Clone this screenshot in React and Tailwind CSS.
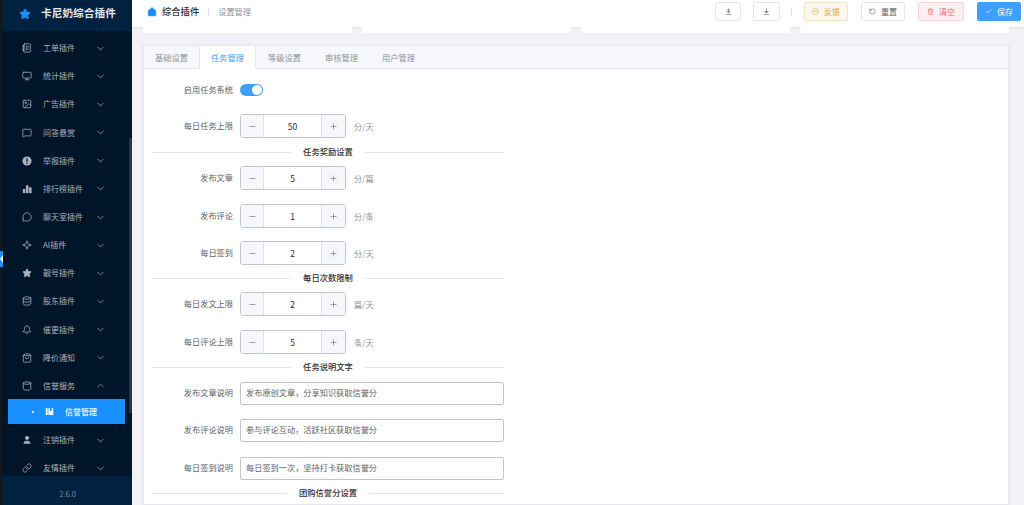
import React from "react";
import { Monitor, Image, MessageSquare, MessageCircle, Sparkle, Star, Database, Bell, ShoppingBag, Cylinder, User, Link, ChevronDown, ChevronUp, Home, RotateCcw, Trash2, Check, Minus, Plus, CircleMinus, NotebookText } from "lucide-react";

const font = { fontFamily: '"Noto Sans CJK SC", "Noto Sans", sans-serif' };

function AlertFilled({ size }) {
  return (
    <svg width={size} height={size} viewBox="0 0 24 24" className="shrink-0">
      <circle cx="12" cy="12" r="11" fill="currentColor" />
      <rect x="10.5" y="5.5" width="3" height="8.5" fill="#001529" />
      <rect x="10.5" y="16" width="3" height="3" fill="#001529" />
    </svg>
  );
}

function BarsFilled({ size }) {
  return (
    <svg width={size} height={size} viewBox="0 0 24 24" className="shrink-0" fill="currentColor">
      <rect x="2" y="12" width="6" height="10" />
      <rect x="9.5" y="3" width="6" height="19" />
      <rect x="17" y="8" width="6" height="14" />
    </svg>
  );
}

function ArrowBar({ size, down }) {
  return (
    <svg width={size} height={size} viewBox="0 0 24 24" fill="none" stroke="currentColor" strokeWidth="2.2">
      <path d="M3 22h18M5 13h14" />
      {down ? <path d="M12 2v15M7 11l5 6 5-6" /> : <path d="M12 18V3M7 9l5-6 5 6" />}
    </svg>
  );
}

function BookFilled({ size }) {
  return (
    <svg width={size} height={size} viewBox="0 0 24 24" className="shrink-0" fill="white">
      <path d="M2 3h5v18H2zM9 3h13v18H9z" />
      <path d="M13 3h5v8l-2.5-2-2.5 2z" fill="#1890ff" />
    </svg>
  );
}

const menu = [
  ["工单插件", NotebookText],
  ["统计插件", Monitor],
  ["广告插件", Image],
  ["问答悬赏", MessageSquare],
  ["举报插件", AlertFilled],
  ["排行榜插件", BarsFilled],
  ["聊天室插件", MessageCircle],
  ["AI插件", Sparkle],
  ["靓号插件", Star, true],
  ["股东插件", Database],
  ["催更插件", Bell],
  ["降价通知", ShoppingBag],
];

function MenuRow({ label, Icon, fill, open }) {
  return (
    <div className="flex h-[28.17px] shrink-0 items-center pl-[19px] pr-[26px] text-[#aab2bd]">
      <Icon size={10} strokeWidth={1.8} fill={fill ? "currentColor" : "none"} className="shrink-0" />
      <span className="ml-[11px] flex-1 text-[8px] leading-none">{label}</span>
      {open ? <ChevronUp size={11} strokeWidth={1.5} /> : <ChevronDown size={11} strokeWidth={1.5} />}
    </div>
  );
}

function Sidebar() {
  return (
    <aside className="relative flex h-full w-[132px] shrink-0 flex-col bg-[#001529] pl-[3px]">
      <div className="absolute left-0 top-0 h-full w-[3px] bg-[#10171f]" />
      <div className="absolute left-0 top-[251px] flex h-[16px] w-[3px] items-center overflow-hidden bg-[#1890ff]">
        <div className="h-0 w-0 border-y-[4px] border-r-[3px] border-y-transparent border-r-white" />
      </div>
      <div className="flex h-[31px] shrink-0 items-center bg-[#002140] pb-[4px] pl-[16px]">
        <Star size={12} className="text-[#1890ff]" fill="#1890ff" />
        <span className="ml-[10px] text-[10.7px] font-bold leading-none text-[#e6e9ed]">卡尼奶综合插件</span>
      </div>
      <div className="relative flex min-h-0 flex-1 flex-col overflow-hidden pt-[3px]">
        <div className="absolute right-0 top-[107px] h-[275px] w-[3px] bg-[#23354a]" />
        {menu.map(([l, I, f]) => <MenuRow key={l} label={l} Icon={I} fill={f} />)}
        <MenuRow label="信誉服务" Icon={Cylinder} open />
        <div className="ml-[5px] mr-[7px] -mt-[1px] flex h-[25px] shrink-0 items-center bg-[#1890ff] pl-[24px] text-white">
          <span className="h-[2px] w-[2px] rounded-full bg-white" />
          <span className="ml-[11px]"><BookFilled size={9} /></span>
          <span className="ml-[11px] text-[8px] font-medium leading-none">信誉管理</span>
        </div>
        <div className="mt-[2px]" />
        <MenuRow label="注销插件" Icon={User} fill />
        <MenuRow label="友情插件" Icon={Link} />
      </div>
      <div className="flex h-[29px] shrink-0 items-center justify-center bg-[#002140] pt-[6px] text-[7.5px] text-[#7d8a99]">2.6.0</div>
    </aside>
  );
}

function TopButton({ children, className }) {
  return <button className={`flex h-[19px] items-center justify-center rounded-[2px] border text-[8px] ${className}`}>{children}</button>;
}

function Header() {
  return (
    <header className="flex h-[27px] shrink-0 items-center bg-white pb-[4px] pl-[15px] pr-[3px] shadow-[0_1px_2px_rgba(0,0,0,0.06)]">
      <Home size={10} fill="#1890ff" className="text-[#1890ff]" />
      <span className="ml-[5px] text-[9.3px] font-medium text-[#303133]">综合插件</span>
      <span className="ml-[9px] h-[8px] w-px bg-[#dcdfe6]" />
      <span className="ml-[9px] text-[8.2px] text-[#909399]">设置管理</span>
      <div className="ml-auto flex items-center">
        <TopButton className="w-[26px] border-[#e4e7ed] text-[#606266]"><ArrowBar size={7} /></TopButton>
        <TopButton className="ml-[12px] w-[27px] border-[#e4e7ed] text-[#606266]"><ArrowBar size={7} down /></TopButton>
        <span className="ml-[11px] h-[8px] w-px bg-[#dcdfe6]" />
        <TopButton className="ml-[12px] w-[44px] gap-[5px] border-[#fae3c4] bg-[#fdf6ec] text-[#e6a23c]"><CircleMinus size={7} />反馈</TopButton>
        <TopButton className="ml-[13px] w-[44px] gap-[5px] border-[#e4e7ed] bg-white text-[#606266]"><RotateCcw size={7} />重置</TopButton>
        <TopButton className="ml-[13px] w-[46px] gap-[5px] border-[#fbd4d4] bg-[#fef0f0] text-[#f56c6c]"><Trash2 size={7} />清空</TopButton>
        <TopButton className="ml-[13px] w-[44px] gap-[5px] border-[#409eff] bg-[#409eff] text-white"><Check size={7} />保存</TopButton>
      </div>
    </header>
  );
}

function Row({ label, children, mt }) {
  return (
    <div className={`flex h-[24px] items-center ${mt}`}>
      <label className="w-[81px] pb-[1px] text-right text-[8.2px] leading-none text-[#606266]">{label}</label>
      <div className="ml-[7px] flex flex-1 items-center">{children}</div>
    </div>
  );
}

function NumberField({ value, unit }) {
  return (
    <>
      <div className="flex h-[24px] w-[106px] overflow-hidden rounded-[3px] border border-[#c0c4cc] bg-white text-[#606266]">
        <span className="flex w-[23px] items-center justify-center border-r border-[#dcdfe6] bg-[#f5f7fa]"><Minus size={9} strokeWidth={1.5} /></span>
        <span className="flex flex-1 items-center justify-center text-[8.5px] text-[#303133]">{value}</span>
        <span className="flex w-[24px] items-center justify-center border-l border-[#dcdfe6] bg-[#f5f7fa]"><Plus size={9} strokeWidth={1.5} /></span>
      </div>
      <span className="ml-[8px] text-[8.2px] text-[#909399]">{unit}</span>
    </>
  );
}

function TextField({ value }) {
  return <div className="flex h-[23px] flex-1 items-center rounded-[2px] border border-[#c0c4cc] px-[5px] pb-[1px] text-[8.2px] text-[#606266]">{value}</div>;
}

function Divider({ children, mt }) {
  return (
    <div className={`flex h-[10px] items-center ${mt}`}>
      <span className="h-px flex-1 bg-[#e4e7ed]" />
      <span className="px-[12px] pb-[1px] text-[8.3px] font-medium leading-none text-[#303133]">{children}</span>
      <span className="h-px flex-1 bg-[#e4e7ed]" />
    </div>
  );
}

function Tabs() {
  const tabs = ["基础设置", "任务管理", "等级设置", "审核管理", "用户管理"];
  return (
    <div className="flex h-[23px] shrink-0 border-b border-[#e4e7ed] bg-[#f5f7fa]">
      {tabs.map((t, i) => (
        <div key={t} className={`flex items-center justify-center text-[8.2px] ${i === 0 ? "w-[55px]" : "w-[57px]"} ${t === "任务管理" ? "-mb-px border-x border-[#e4e7ed] bg-white text-[#409eff]" : "text-[#909399]"}`}>{t}</div>
      ))}
    </div>
  );
}

export default function App() {
  return (
    <div style={font} className="flex h-[505px] w-[1024px] overflow-hidden bg-[#f0f2f5]">
      <Sidebar />
      <main className="flex min-w-0 flex-1 flex-col">
        <Header />
        <div className="flex gap-[10px] pl-[11px] pr-[15px]">
          {[0, 1, 2, 3].map((i) => <div key={i} className="h-[6px] flex-1 rounded-b-[2px] bg-white" />)}
        </div>
        <section className="ml-[11px] mr-[15px] mt-[12px] flex min-h-0 flex-1 flex-col rounded-t-[2px] border border-[#e4e7ed] bg-white shadow-[0_1px_3px_rgba(0,0,0,0.08)]">
          <Tabs />
          <div className="w-[360px] pl-[8px]">
            <Row label="启用任务系统" mt="mt-[9px]">
              <span className="flex h-[12px] w-[23px] items-center justify-end rounded-full bg-[#409eff] pr-[1px]">
                <span className="h-[10px] w-[10px] rounded-full bg-white" />
              </span>
            </Row>
            <Row label="每日任务上限" mt="mt-[12px]"><NumberField value="50" unit="分/天" /></Row>
            <Divider mt="mt-[9px]">任务奖励设置</Divider>
            <Row label="发布文章" mt="mt-[9px]"><NumberField value="5" unit="分/篇" /></Row>
            <Row label="发布评论" mt="mt-[14px]"><NumberField value="1" unit="分/条" /></Row>
            <Row label="每日签到" mt="mt-[13px]"><NumberField value="2" unit="分/天" /></Row>
            <Divider mt="mt-[8px]">每日次数限制</Divider>
            <Row label="每日发文上限" mt="mt-[9px]"><NumberField value="2" unit="篇/天" /></Row>
            <Row label="每日评论上限" mt="mt-[14px]"><NumberField value="5" unit="条/天" /></Row>
            <Divider mt="mt-[8px]">任务说明文字</Divider>
            <Row label="发布文章说明" mt="mt-[9px]"><TextField value="发布原创文章，分享知识获取信誉分" /></Row>
            <Row label="发布评论说明" mt="mt-[13px]"><TextField value="参与评论互动，活跃社区获取信誉分" /></Row>
            <Row label="每日签到说明" mt="mt-[14px]"><TextField value="每日签到一次，坚持打卡获取信誉分" /></Row>
            <Divider mt="mt-[8px]">团购信誉分设置</Divider>
          </div>
        </section>
      </main>
    </div>
  );
}
